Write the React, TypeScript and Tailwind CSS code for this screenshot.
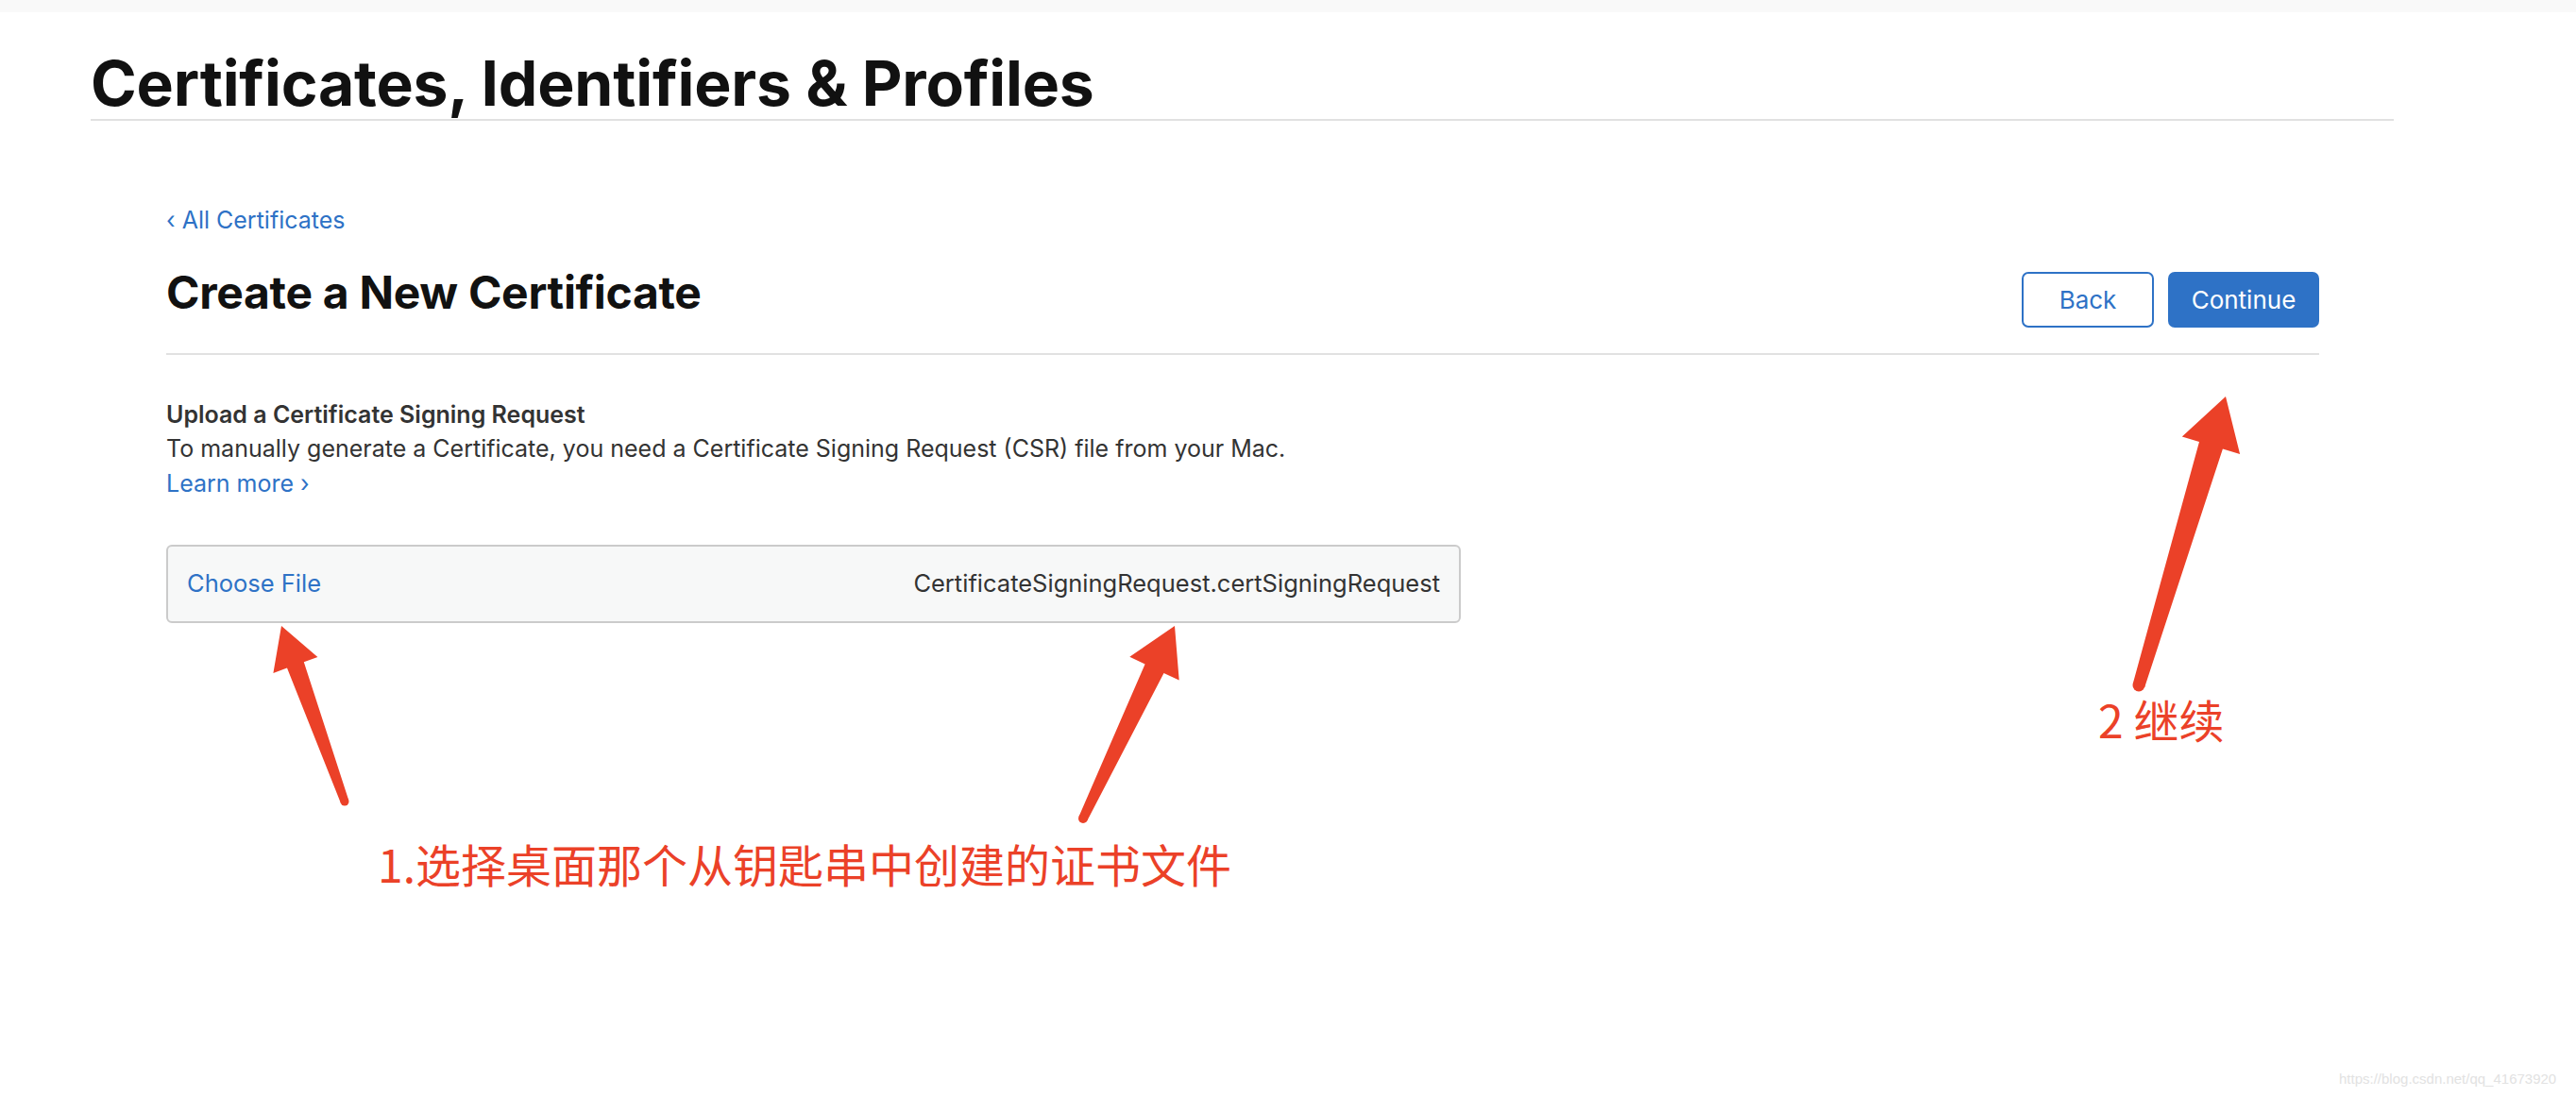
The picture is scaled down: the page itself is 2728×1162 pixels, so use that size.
const UI_FONT = "font-['Inter','Noto_Sans',sans-serif]";

type Arrow = {
  tail: [number, number];
  tip: [number, number];
  headLen: number;
  headHalf: number;
  shaftHead: number;
  shaftTail: number;
};

const arrows: Arrow[] = [
  { tail: [365, 849], tip: [298, 663], headLen: 44, headHalf: 25, shaftHead: 19, shaftTail: 9 },
  { tail: [1147, 867], tip: [1244, 663], headLen: 50, headHalf: 29, shaftHead: 22, shaftTail: 10 },
  { tail: [2265, 726], tip: [2357, 420], headLen: 54, headHalf: 32, shaftHead: 26, shaftTail: 13 },
];

// tapered arrow: wide under the head, thin at the tail
const arrowPath = ({ tail, tip, headLen, headHalf, shaftHead, shaftTail }: Arrow) => {
  const [x1, y1] = tail;
  const [x2, y2] = tip;
  const len = Math.hypot(x2 - x1, y2 - y1);
  const ux = (x2 - x1) / len;
  const uy = (y2 - y1) / len;
  const nx = -uy;
  const ny = ux;
  const bx = x2 - ux * headLen;
  const by = y2 - uy * headLen;
  const p = (x: number, y: number) => `${x.toFixed(1)} ${y.toFixed(1)}`;
  const a = shaftHead / 2;
  const r = shaftTail / 2;
  return [
    `M ${p(x2, y2)}`,
    `L ${p(bx + nx * headHalf, by + ny * headHalf)}`,
    `L ${p(bx + nx * a, by + ny * a)}`,
    `L ${p(x1 + nx * r, y1 + ny * r)}`,
    `L ${p(x1 - nx * r, y1 - ny * r)}`,
    `L ${p(bx - nx * a, by - ny * a)}`,
    `L ${p(bx - nx * headHalf, by - ny * headHalf)}`,
    "Z",
  ].join(" ");
};

const Annotations = () => (
  <>
    <svg className="absolute inset-0 pointer-events-none" width="2728" height="1162">
      {arrows.map((a, i) => (
        <g key={i} fill="#eb4128">
          <path d={arrowPath(a)} />
          <circle cx={a.tail[0]} cy={a.tail[1]} r={a.shaftTail / 2} />
        </g>
      ))}
    </svg>
    <div className="absolute left-[400px] top-[890px] text-[48px] leading-[48px] text-[#eb4128] whitespace-nowrap font-['Noto_Sans_CJK_SC',sans-serif]">
      1.选择桌面那个从钥匙串中创建的证书文件
    </div>
    <div className="absolute left-[2222px] top-[737px] text-[48px] leading-[48px] text-[#eb4128] whitespace-nowrap font-['Noto_Sans_CJK_SC',sans-serif]">
      2 继续
    </div>
    <div className="absolute left-[2477px] top-[1133px] text-[15px] leading-[20px] text-[#e2e2e2] font-['Liberation_Sans',sans-serif]">
      https://blog.csdn.net/qq_41673920
    </div>
  </>
);

export default function App() {
  return (
    <div className={`relative h-[1162px] w-full overflow-hidden bg-white ${UI_FONT}`}>
      <div className="h-[13px] bg-[#f9f9f9]" />

      <header className="ml-[96px] w-[2439px] border-b-2 border-[#e1e1e1] pt-[39px] pb-[2px]">
        <h1 className="text-[66px] leading-[72px] font-bold text-[#111] tracking-[-0.2px]">
          Certificates, Identifiers &amp; Profiles
        </h1>
      </header>

      <main className="ml-[176px] w-[2280px]">
        <a className="mt-[89px] block text-[25px] leading-[32px] text-[#2e72c6]">‹ All Certificates</a>

        <div className="mt-[33px] flex items-start justify-between border-b-2 border-[#e1e1e1] pb-[27px]">
          <h2 className="text-[48px] leading-[56px] font-bold text-[#111] tracking-[-0.3px]">
            Create a New Certificate
          </h2>
          <div className="mt-[6px] flex gap-[15px]">
            <button className="h-[59px] w-[140px] rounded-[7px] border-2 border-[#2e72c6] bg-white text-[26px] text-[#2e72c6]">
              Back
            </button>
            <button className="h-[59px] w-[160px] rounded-[7px] bg-[#2e72c6] text-[26px] text-white">
              Continue
            </button>
          </div>
        </div>

        <section className="mt-[45px] text-[25px] leading-[36px] text-[#333]">
          <h3 className="font-semibold">Upload a Certificate Signing Request</h3>
          <p>To manually generate a Certificate, you need a Certificate Signing Request (CSR) file from your Mac.</p>
          <a className="mt-[1px] block text-[#2e72c6]">Learn more ›</a>
        </section>

        <div className="mt-[47px] flex h-[83px] w-[1371px] items-center justify-between rounded-[6px] border-2 border-[#cbcbcb] bg-[#f7f8f8] px-[20px] text-[25.5px]">
          <span className="text-[#2e72c6]">Choose File</span>
          <span className="text-[#333]">CertificateSigningRequest.certSigningRequest</span>
        </div>
      </main>

      <Annotations />
    </div>
  );
}
